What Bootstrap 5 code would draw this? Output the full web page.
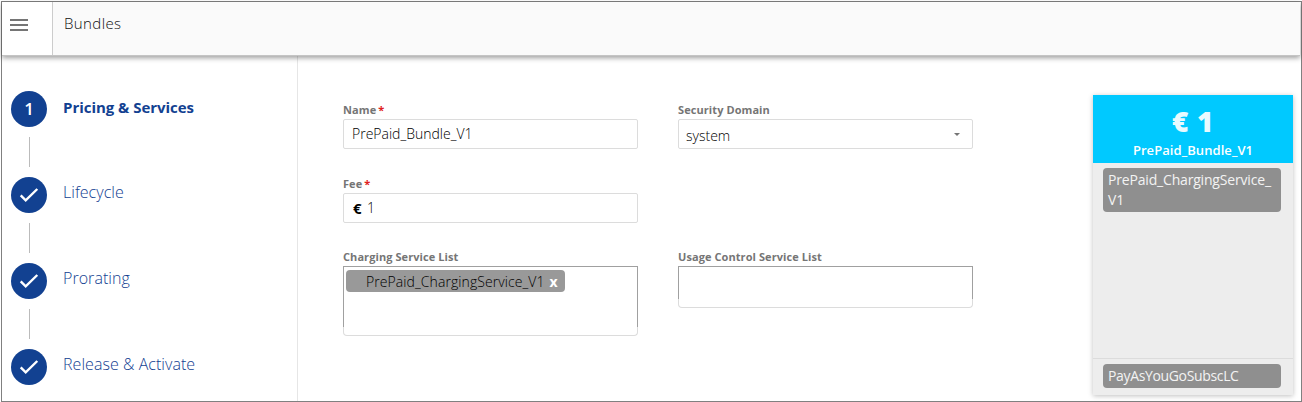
<!DOCTYPE html>
<html lang="en">
<head>
<meta charset="utf-8">
<meta name="viewport" content="width=device-width, initial-scale=1">
<title>Bundles</title>
<link rel="stylesheet" href="https://cdn.jsdelivr.net/npm/bootstrap@5.3.0/dist/css/bootstrap.min.css">
<style>
  body { background: #fff; font-family: "Open Sans", "Noto Sans", sans-serif; font-size: 14px; line-height: 20px; color: #333; overflow: hidden; }
  .app-frame { width: 1301px; height: 401px; margin: 1px 0 0 1px; border: 1px solid #808080; }
  .topbar { height: 54px; background: #fafafa; border-bottom: 1px solid #c4c4c4; box-shadow: 0 2px 5px rgba(0,0,0,.38); margin-right: 1px; position: relative; }
  .menu-btn { width: 51px; background: #fff; border: 0; border-right: 1px solid #ccc; padding: 17px 0 0 8px; }
  .page-title { font-size: 15px; font-weight: 300; color: #111; padding: 11px 0 0 11px; letter-spacing: .4px; }
  .steps { width: 296px; border-right: 1px solid #e6e6e6; padding: 35px 0 0 9px; }
  .step-dot { width: 36px; height: 36px; background: #124191; color: #fff; font-size: 17px; font-weight: 600; }
  .step-line { width: 1px; height: 30px; background: #bbb; margin: 10px 0 10px 18px; }
  .step-name { color: #124191; font-size: 16px; margin: -6px 0 0 16px; white-space: nowrap; font-weight: 300; letter-spacing: .05px; }
  .step-name.current { font-weight: 700; font-size: 15px; letter-spacing: -.03px; margin-top: -4px; }
  .form-area { margin-left: 45px; padding-top: 46px; width: 630px; }
  .form-grid { display: grid; grid-template-columns: 295px 295px; grid-template-rows: 74px 73px auto; column-gap: 40px; }
  .field-label { font-size: 11px; font-weight: 700; color: #757575; line-height: 15px; height: 17px; display: block; letter-spacing: .08px; }
  .req { color: #e02020; font-size: 11px; line-height: 10px; margin-left: -1px; }
  .box { height: 30px; border: 1px solid #dcdcdc; border-radius: 2px; padding: 0 8px; font-size: 14px; font-weight: 300; color: #000; line-height: 27px; white-space: nowrap; }
  .select-value { padding-top: 3px; margin-left: -1px; }
  .currency { font-size: 15px; font-weight: 700; line-height: 29px; width: 15px; padding-left: 1px; }
  .listbox { border: 1px solid #a0a0a0; border-bottom: 0; padding: 3px 2px; }
  .list-short { height: 33px; }
  .list-tall { height: 61px; }
  .list-foot { height: 9px; border: 1px solid #dcdcdc; border-top: 0; border-radius: 0 0 4px 4px; }
  .tag { width: 219px; height: 22px; border-radius: 4px; background: #999; color: #000; font-weight: 300; line-height: 24px; padding-left: 20px; white-space: nowrap; letter-spacing: .08px; }
  .tag b { color: #fff; font-size: 14px; font-weight: 700; margin-left: 5px; }
  .summary { width: 200px; height: 300px; margin: 39px 8px 0 auto; background: #ededed; box-shadow: 0 1px 5px rgba(0,0,0,.25); }
  .summary-head { height: 68px; background: #00c9ff; color: #fff; padding-top: 10px; }
  .price { font-size: 28px; font-weight: 800; line-height: 33px; color: #e9faff; letter-spacing: .6px; }
  .bundle-name { font-size: 13px; font-weight: 600; line-height: 24px; letter-spacing: .06px; }
  .summary-part { padding: 5px 10px; }
  .summary-foot { height: 37px; border-top: 1px solid #dcdcdc; }
  .chip { width: 178px; border-radius: 4px; background: #8f8f8f; color: #f3f3f3; padding: 2px 5px; line-height: 20px; word-break: break-all; letter-spacing: -.18px; }
  .summary-foot .chip { letter-spacing: -.35px; }
</style>
<script src="https://cdn.jsdelivr.net/npm/bootstrap@5.3.0/dist/js/bootstrap.bundle.min.js"></script>
</head>
<body>
<div class="app-frame d-flex flex-column">
  <header class="topbar d-flex flex-shrink-0">
    <button class="menu-btn d-flex" aria-label="Menu">
      <svg width="18" height="12" viewBox="0 0 18 12"><path d="M0 1h18M0 6h18M0 11h18" stroke="#757575" stroke-width="2"/></svg>
    </button>
    <div class="page-title">Bundles</div>
  </header>
  <main class="d-flex flex-grow-1">
    <nav class="steps flex-shrink-0">
      <div class="d-flex align-items-center">
        <span class="step-dot rounded-circle d-flex align-items-center justify-content-center">1</span>
        <span class="step-name current">Pricing &amp; Services</span>
      </div>
      <div class="step-line"></div>
      <div class="d-flex align-items-center">
        <span class="step-dot rounded-circle d-flex align-items-center justify-content-center"><svg width="20" height="16" viewBox="0 0 20 16"><path d="M1.7 8.3l5 5L18.3 2" fill="none" stroke="#fff" stroke-width="2.4"/></svg></span>
        <span class="step-name">Lifecycle</span>
      </div>
      <div class="step-line"></div>
      <div class="d-flex align-items-center">
        <span class="step-dot rounded-circle d-flex align-items-center justify-content-center"><svg width="20" height="16" viewBox="0 0 20 16"><path d="M1.7 8.3l5 5L18.3 2" fill="none" stroke="#fff" stroke-width="2.4"/></svg></span>
        <span class="step-name">Prorating</span>
      </div>
      <div class="step-line"></div>
      <div class="d-flex align-items-center">
        <span class="step-dot rounded-circle d-flex align-items-center justify-content-center"><svg width="20" height="16" viewBox="0 0 20 16"><path d="M1.7 8.3l5 5L18.3 2" fill="none" stroke="#fff" stroke-width="2.4"/></svg></span>
        <span class="step-name">Release &amp; Activate</span>
      </div>
    </nav>
    <section class="form-area flex-shrink-0">
      <div class="form-grid">
        <div>
          <label class="field-label">Name <span class="req">*</span></label>
          <div class="box">PrePaid_Bundle_V1</div>
        </div>
        <div>
          <label class="field-label">Security Domain</label>
          <div class="box d-flex justify-content-between align-items-center">
            <span class="select-value">system</span>
            <svg class="me-1" width="6" height="3" viewBox="0 0 6 3"><path d="M0 0h6L3 3z" fill="#757575"/></svg>
          </div>
        </div>
        <div>
          <label class="field-label">Fee <span class="req">*</span></label>
          <div class="box d-flex"><b class="currency">€</b><span>1</span></div>
        </div>
        <div></div>
        <div>
          <label class="field-label">Charging Service List</label>
          <div class="listbox list-tall"><div class="tag">PrePaid_ChargingService_V1<b>x</b></div></div>
          <div class="list-foot"></div>
        </div>
        <div>
          <label class="field-label">Usage Control Service List</label>
          <div class="listbox list-short"></div>
          <div class="list-foot"></div>
        </div>
      </div>
    </section>
    <aside class="summary d-flex flex-column flex-shrink-0">
      <div class="summary-head text-center">
        <div class="price">€ 1</div>
        <div class="bundle-name">PrePaid_Bundle_V1</div>
      </div>
      <div class="summary-part flex-grow-1"><div class="chip">PrePaid_ChargingService_V1</div></div>
      <div class="summary-part summary-foot"><div class="chip">PayAsYouGoSubscLC</div></div>
    </aside>
  </main>
</div>
</body>
</html>
